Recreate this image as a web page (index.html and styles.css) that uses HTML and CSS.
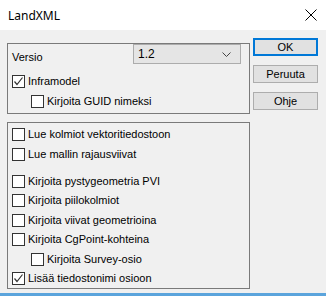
FILE: index.html
```html
<!DOCTYPE html>
<html lang="fi">
<head>
    <meta charset="UTF-8">
    <meta name="viewport" content="width=device-width, initial-scale=1.0">
    <title>LandXML</title>
    <link rel="stylesheet" href="styles.css">
</head>
<body>
    <div class="window">
        <div class="titlebar">
            <span class="title">LandXML</span>
            <svg class="close" width="12" height="12" viewBox="0 0 12 12">
                <path d="M0.5 0.5 L11.5 11.5 M11.5 0.5 L0.5 11.5" stroke="#000" stroke-width="1" fill="none"/>
            </svg>
        </div>
        <div class="dialog">
            <div class="groups">
                <div class="group g1">
                    <div class="version">
                        <span class="label">Versio</span>
                        <div class="combo">
                            <span>1.2</span>
                            <svg width="9" height="5" viewBox="0 0 9 5">
                                <path d="M0.5 0.5 L4.5 4.5 L8.5 0.5" stroke="#444" fill="none"/>
                            </svg>
                        </div>
                    </div>
                    <div class="chk on">Inframodel</div>
                    <div class="chk sub">Kirjoita GUID nimeksi</div>
                </div>
                <div class="group g2">
                    <div class="chk">Lue kolmiot vektoritiedostoon</div>
                    <div class="chk">Lue mallin rajausviivat</div>
                    <div class="chk gap short">Kirjoita pystygeometria PVI</div>
                    <div class="chk">Kirjoita piilokolmiot</div>
                    <div class="chk short">Kirjoita viivat geometrioina</div>
                    <div class="chk">Kirjoita CgPoint-kohteina</div>
                    <div class="chk sub short">Kirjoita Survey-osio</div>
                    <div class="chk on">Lisää tiedostonimi osioon</div>
                </div>
            </div>
            <div class="buttons">
                <button class="default">OK</button>
                <button>Peruuta</button>
                <button>Ohje</button>
            </div>
        </div>
    </div>
</body>
</html>
```
FILE: styles.css
```css
body {
    margin: 0;
    font-family: "Liberation Sans", Arial, sans-serif;
    font-size: 11px;
    color: #000;
}
.window {
    width: 326px;
    height: 296px;
    display: flex;
    flex-direction: column;
    background: #f0f0f0;
    border-bottom: 3px solid #5ba4dc;
    box-sizing: border-box;
}
.titlebar {
    height: 30px;
    background: #fff;
    display: flex;
    align-items: center;
    justify-content: space-between;
    padding: 0 9px 0 8px;
}
.title {
    font-family: "Noto Sans", "Open Sans", sans-serif;
    font-size: 12px;
}
.dialog {
    display: flex;
    padding: 8px 0 0 7px;
}
.groups {
    width: 243px;
    padding-top: 5px;
}
.group {
    border: 1px solid #7a7a7a;
    box-sizing: border-box;
    padding: 0 0 0 4px;
}
.g1 {
    height: 71px;
}
.g2 {
    height: 167px;
    margin-top: 8px;
    padding-top: 2px;
}
.version {
    display: flex;
    justify-content: space-between;
    align-items: center;
    height: 20px;
    margin-bottom: 8px;
}
.label {
    padding-top: 6px;
}
.combo {
    width: 108px;
    height: 20px;
    box-sizing: border-box;
    background: #e5e5e5;
    border: 1px solid #acacac;
    margin-right: 8px;
    display: flex;
    align-items: center;
    justify-content: space-between;
    padding: 0 9px 0 4px;
    font-size: 12px;
}
.chk {
    height: 20px;
    display: flex;
    align-items: flex-start;
    gap: 3px;
    line-height: 13px;
    padding-top: 3px;
    box-sizing: border-box;
}
.chk.short {
    height: 19px;
}
.chk::before {
    content: "";
    flex: none;
    width: 13px;
    height: 13px;
    box-sizing: border-box;
    border: 1px solid #333;
    background: #fff center / 11px 11px no-repeat;
}
.chk.on::before {
    background-image: url("data:image/svg+xml,%3Csvg xmlns='http://www.w3.org/2000/svg' viewBox='0 0 11 11'%3E%3Cpath d='M1.5 5.5 L4 8.5 L9.5 1.5' stroke='%23333' stroke-width='1.2' fill='none'/%3E%3C/svg%3E");
}
.chk.sub {
    padding-left: 19px;
}
.chk.gap {
    margin-top: 7px;
}
.buttons {
    display: flex;
    flex-direction: column;
    gap: 9px;
    margin-left: 3px;
}
button {
    width: 65px;
    height: 18px;
    padding: 0;
    font: inherit;
    background: #e1e1e1;
    border: 1px solid #adadad;
}
button.default {
    border: 2px solid #0078d7;
}
```
